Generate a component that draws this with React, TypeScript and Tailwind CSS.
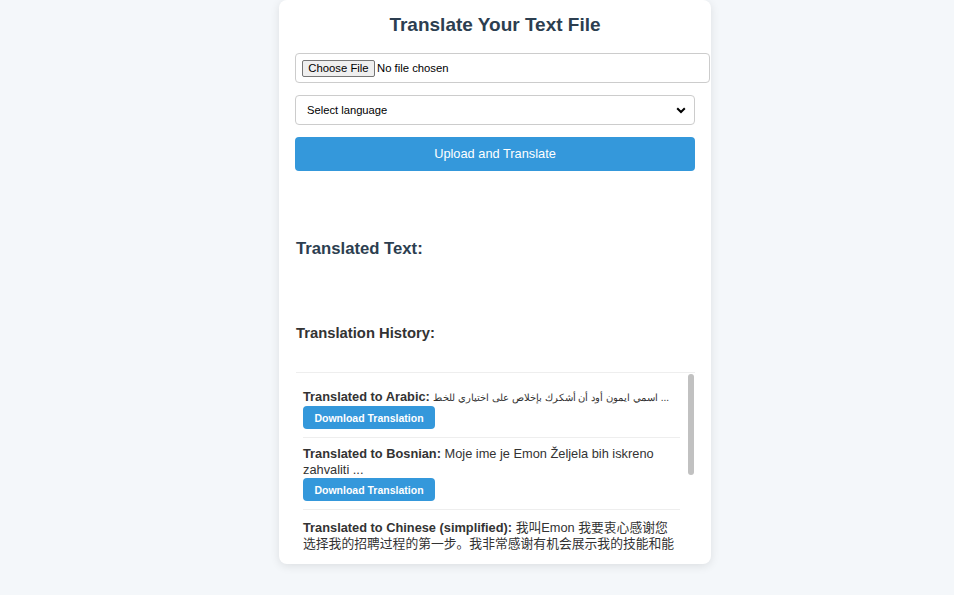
import React from "react";

const items = [
  {
    lang: "Arabic",
    text: "اسمي ايمون أود أن أشكرك بإخلاص على اختياري للخط ...",
    rtl: true,
    pad: "pt-[8px]",
  },
  {
    lang: "Bosnian",
    text: "Moje ime je Emon Željela bih iskreno zahvaliti ...",
    rtl: false,
    pad: "pt-[8px]",
  },
  {
    lang: "Chinese (simplified)",
    text: "我叫Emon 我要衷心感谢您选择我的招聘过程的第一步。我非常感谢有机会展示我的技能和能力。",
    rtl: false,
    pad: "pt-[10px]",
  },
];

export default function App() {
  return (
    <div
      className="min-h-[595px] w-full bg-[#f4f7fa]"
      style={{ fontFamily: '"Liberation Sans", Arial, "Noto Sans CJK SC", sans-serif' }}
    >
      <div className="ml-[279px] flex w-[432px] flex-col rounded-[8px] bg-white px-[16px] pb-[12px] pt-[13px] shadow-[0_2px_10px_rgba(0,0,0,0.1)]">
        <h2 className="text-center text-[19px] font-bold leading-[24px] text-[#2c3e50]">
          Translate Your Text File
        </h2>
        <div className="mt-[16px] flex h-[30px] w-[415px] items-center rounded-[4px] border border-[#cccccc] px-[6px] text-[11.3px] text-black">
          <span className="flex h-[17px] w-[73px] items-center justify-center rounded-[2px] border border-[#767676] bg-[#efefef]">
            Choose File
          </span>
          <span className="ml-[2px]">No file chosen</span>
        </div>
        <div className="mt-[12px] flex h-[30px] w-[400px] items-center justify-between rounded-[4px] border border-[#cccccc] pl-[11px] pr-[8px] text-[11.2px] text-black">
          <span>Select language</span>
          <svg width="10" height="7" viewBox="0 0 10 7">
            <path d="M1.2 1.2 L5 5 L8.8 1.2" stroke="black" strokeWidth="2" fill="none" />
          </svg>
        </div>
        <button className="mt-[12px] flex h-[34px] w-[400px] items-center justify-center rounded-[4px] bg-[#3498db] text-[12.8px] text-white">
          Upload and Translate
        </button>
        <h3 className="mt-[68px] pl-[1px] text-[16.7px] font-bold leading-[20px] text-[#2c3e50]">
          Translated Text:
        </h3>
        <h3 className="mt-[64px] pl-[1px] text-[14.8px] font-bold leading-[20px] text-[#333333]">
          Translation History:
        </h3>
        <div className="ml-[1px] mt-[29px] flex h-[180px] w-[399px] border-t border-[#eeeeee]">
          <div className="flex-1 overflow-hidden px-[7px] pt-[8px]">
            {items.map((it) => (
              <div key={it.lang} className={`border-b border-[#eeeeee] pb-[8px] text-[12.8px] leading-[16px] text-[#333333] ${it.pad}`}>
                <div className={it.rtl ? "whitespace-nowrap" : ""}>
                  <strong>Translated to {it.lang}:</strong>{" "}
                  {it.rtl ? <span className="text-[10.1px]">{it.text}</span> : it.text}
                </div>
                <div className="flex">
                  <span className="flex h-[23px] w-[132px] items-center justify-center rounded-[4px] bg-[#3498db] text-[10.5px] font-bold text-white">
                    Download Translation
                  </span>
                </div>
              </div>
            ))}
          </div>
          <div className="flex w-[8px] flex-col pt-[1px]">
            <div className="ml-[1px] h-[101px] w-[6px] rounded-[3px] bg-[#c1c1c1]" />
          </div>
        </div>
      </div>
    </div>
  );
}
